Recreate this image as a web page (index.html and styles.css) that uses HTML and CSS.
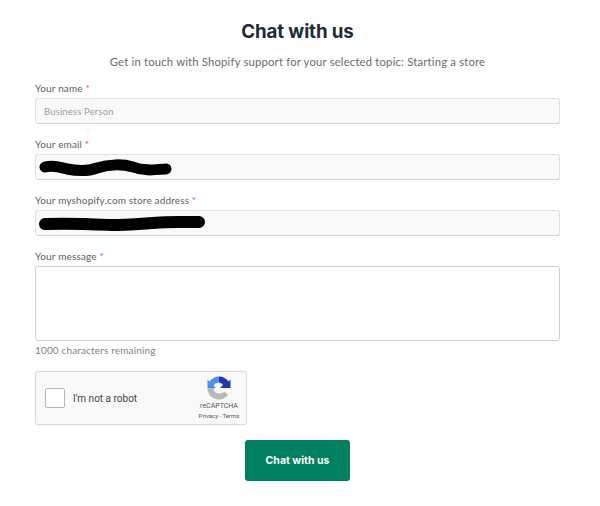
FILE: index.html
```html
<!DOCTYPE html>
<html lang="en">
<head>
<meta charset="utf-8">
<title>Chat with us</title>
<link rel="stylesheet" href="styles.css">
</head>
<body>
<main class="page">
  <h1 class="title">Chat with us</h1>
  <p class="subtitle">Get in touch with Shopify support for your selected topic: Starting a store</p>
  <form class="form">
    <div class="field">
      <label class="label">Your name <span class="req">*</span></label>
      <div class="input input-muted">Business Person</div>
    </div>
    <div class="field">
      <label class="label">Your email <span class="req">*</span></label>
      <div class="input">
        <svg class="scribble" width="140" height="20" viewBox="0 0 140 20"><path d="M6 9 C14 7 20 9 28 11 C38 13 50 13 58 10 C70 6 84 6 94 9 C104 13 114 12 127 11" fill="none" stroke="#000" stroke-width="11" stroke-linecap="round"/></svg>
      </div>
    </div>
    <div class="field">
      <label class="label">Your myshopify.com store address <span class="req">*</span></label>
      <div class="input">
        <svg class="scribble" width="172" height="20" viewBox="0 0 172 20"><path d="M6 10 C30 9 50 10 72 11 C95 11 118 8 140 8 L160 8" fill="none" stroke="#000" stroke-width="12" stroke-linecap="round"/></svg>
      </div>
    </div>
    <div class="field field-last">
      <label class="label">Your message <span class="req">*</span></label>
      <div class="textarea"></div>
    </div>
    <p class="helper">1000 characters remaining</p>
    <div class="captcha">
      <span class="check"></span>
      <span class="robot">I'm not a robot</span>
      <div class="brand">
        <svg class="logo" width="24" height="24" viewBox="0 0 24 24">
          <path d="M12 .5 C8 .5 4.500 2.500 2.500 5.500 L.5 3.500 V12 H9 L6.500 9.500 C7.500 7.500 9.500 6.500 12 6.500 Z" fill="#4a90f2"/>
          <path d="M12 .5 C16 .5 19.500 2.500 21.500 5.500 L23.500 3.500 V12 H13 L16 9 C15 7.500 13.500 6.500 12 6.500 Z" fill="#1c3aa9"/>
          <path d="M.5 12 C.5 18.500 5.500 23.500 12 23.500 C16 23.500 19 21.500 21 19 L17.500 15.500 C16 17 14 17.500 12 17.500 C9.500 17.500 7.500 16 6.500 13.500 L8 12 Z" fill="#b8b8b8"/>
        </svg>
        <span class="brand-name">reCAPTCHA</span>
        <span class="brand-links">Privacy - Terms</span>
      </div>
    </div>
    <div class="actions"><button type="button" class="btn">Chat with us</button></div>
  </form>
</main>
</body>
</html>
```
FILE: styles.css
```css
* { box-sizing: border-box; }
html, body { margin: 0; background: #fff; }
body { font-family: "Lato", "Liberation Sans", sans-serif; color: #212b36; }
.page { width: 600px; height: 506px; padding: 20px 40px 0 35px; overflow: hidden; }
.title { margin: 0; text-align: center; font-size: 18.700px; line-height: 24px; font-weight: 700; color: #212b36; font-family: "Inter", sans-serif; letter-spacing: -0.1px; }
.subtitle { margin: 11px 0 0; text-align: center; font-size: 11.250px; line-height: 14px; letter-spacing: 0.2px; color: #666b72; font-family: "Lato", sans-serif; }
.form { display: flex; flex-direction: column; margin-top: 12px; }
.field { display: flex; flex-direction: column; margin-bottom: 13px; }
.field-last { margin-bottom: 0; }
.label { font-size: 10px; line-height: 14px; margin-bottom: 3px; letter-spacing: 0.15px; color: #5a5f66; font-family: "Lato", sans-serif; }
.req { color: #d9534f; }
.input { height: 26px; border: 1px solid #e0e0e0; border-bottom-color: #d4d4d4; border-radius: 3px; background: #f9f9f9; padding: 0 8px; display: flex; align-items: center; font-size: 9.500px; letter-spacing: 0.15px; font-family: "Lato", sans-serif; }
.input-muted { color: #9a9fa5; }
.scribble { margin-left: -5px; margin-top: 2px; display: block; }
.textarea { height: 75px; border: 1px solid #cfcfcf; border-radius: 3px; background: #fff; }
.helper { margin: 2px 0 0; font-size: 10px; line-height: 14px; letter-spacing: 0.15px; color: #808488; font-family: "Lato", sans-serif; }
.captcha { margin-top: 14px; width: 212px; height: 54px; border: 1px solid #dcdcdc; border-radius: 3px; background: #f9f9f9; display: flex; align-items: center; padding-left: 9px; box-shadow: 0 0 3px rgba(0,0,0,.06); font-family: "Roboto", sans-serif; }
.check { width: 20px; height: 20px; border: 1px solid #b5b5b5; border-radius: 2px; background: #fff; }
.robot { margin-left: 8px; font-size: 10px; color: #444; }
.brand { margin-left: auto; width: 54px; display: flex; flex-direction: column; align-items: center; color: #666; }
.logo { display: block; margin-bottom: 2px; }
.brand-name { font-size: 7px; line-height: 9px; color: #555; }
.brand-links { font-size: 6px; line-height: 9px; color: #555; }
.actions { margin-top: 15px; display: flex; justify-content: center; }
.btn { width: 105px; height: 41px; border: 0; border-radius: 3px; background: #008060; color: #fff; font-size: 10.500px; font-weight: 700; font-family: "Inter", sans-serif; padding: 0; }
```
